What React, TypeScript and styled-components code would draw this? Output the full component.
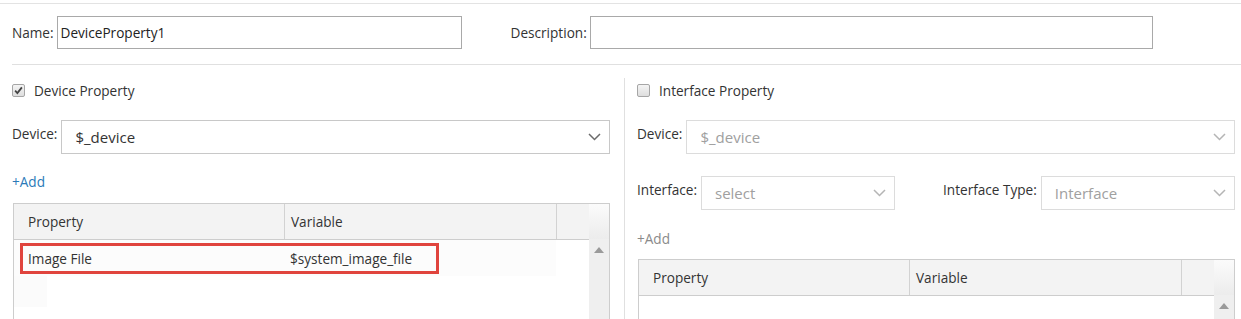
import styled, { createGlobalStyle } from 'styled-components'

const GlobalStyle = createGlobalStyle`
  html, body {
    margin: 0;
    padding: 0;
    background: #fff;
    overflow: hidden;
  }
  body {
    font-family: 'Open Sans', 'Liberation Sans', sans-serif;
    font-size: 13px;
    color: #333;
  }
`

const Page = styled.div`
  width: 1241px;
  height: 319px;
  padding-top: 3px;
  box-sizing: border-box;
  overflow: hidden;
`

const TopRule = styled.div`
  border-top: 1px solid #e3e3e3;
`

const NameRow = styled.div`
  display: flex;
  align-items: center;
  padding: 12px 0 15px 12px;
`

const Field = styled.div<{ $ml?: number }>`
  display: flex;
  align-items: center;
  margin-left: ${({ $ml }) => $ml ?? 0}px;
`

const Label = styled.label`
  font-size: 13.6px;
  color: #333;
  margin-right: 3px;
  white-space: nowrap;
`

const TextInput = styled.div<{ $w: number }>`
  width: ${({ $w }) => $w}px;
  height: 33px;
  box-sizing: border-box;
  border: 1px solid #a9a9a9;
  padding: 0 3px;
  display: flex;
  align-items: center;
  font-size: 13.6px;
  color: #222;
`

const Separator = styled.div`
  margin-left: 12px;
  border-top: 1px solid #e0e0e0;
`

const Columns = styled.div`
  display: grid;
  grid-template-columns: 598px 598px;
  column-gap: 27px;
  padding-left: 12px;
  margin-top: 12px;
`

const Column = styled.div<{ $divider?: boolean }>`
  position: relative;
  display: flex;
  flex-direction: column;
  ${({ $divider }) =>
    $divider &&
    `
    &::before {
      content: '';
      position: absolute;
      left: -13px;
      top: 1px;
      bottom: -40px;
      border-left: 1px solid #e0e0e0;
    }
  `}
`

const CheckRow = styled.div`
  display: flex;
  align-items: center;
  height: 26px;
  font-size: 13.6px;
  color: #333;
`

const Box = styled.span`
  width: 13px;
  height: 13px;
  box-sizing: border-box;
  border: 1px solid #a6a6a6;
  border-radius: 2px;
  background: linear-gradient(#f4f4f4, #dedede);
  margin-right: 9px;
  display: flex;
  align-items: center;
  justify-content: center;
`

const SelectRow = styled.div<{ $mt: number }>`
  display: flex;
  align-items: flex-start;
  margin-top: ${({ $mt }) => $mt}px;
`

const SelectLabel = styled.label`
  font-size: 13.6px;
  color: #333;
  padding-top: 4px;
  margin-right: 4px;
  white-space: nowrap;
`

const Select = styled.div<{ $w?: number; $disabled?: boolean }>`
  ${({ $w }) => ($w ? `width: ${$w}px;` : 'flex: 1;')}
  height: 34px;
  box-sizing: border-box;
  border: 1px solid ${({ $disabled }) => ($disabled ? '#dcdcdc' : '#c8c8c8')};
  display: flex;
  align-items: center;
  justify-content: space-between;
  padding: 0 8px 0 13px;
  font-size: 15px;
  color: ${({ $disabled }) => ($disabled ? '#a0a0a0' : '#333')};
`

const Pair = styled.div<{ $ml?: number; $grow?: boolean }>`
  display: flex;
  align-items: flex-start;
  margin-left: ${({ $ml }) => $ml ?? 0}px;
  ${({ $grow }) => $grow && 'flex: 1;'}
`

const AddLink = styled.a<{ $disabled?: boolean; $mt: number }>`
  display: block;
  margin-top: ${({ $mt }) => $mt}px;
  font-size: 13.6px;
  color: ${({ $disabled }) => ($disabled ? '#8a8a8a' : '#2a7ab8')};
  text-decoration: none;
  line-height: 18px;
`

const Table = styled.div<{ $mt: number }>`
  position: relative;
  margin-top: ${({ $mt }) => $mt}px;
  margin-left: 1px;
  width: 597px;
  border: 1px solid #cdcdcd;
  border-bottom: none;
  box-sizing: border-box;
  display: grid;
  grid-template-columns: 1fr 20px;
  height: 140px;
`

const TableBody = styled.div`
  display: flex;
  flex-direction: column;
`

const HeadRow = styled.div`
  display: grid;
  grid-template-columns: 270px 272px 1fr;
  height: 35px;
  background: #f3f3f3;
  border-bottom: 1px solid #cdcdcd;
`

const HeadCell = styled.div`
  display: flex;
  align-items: center;
  padding-left: 14px;
  font-size: 13.6px;
  color: #333;
  & + & {
    border-left: 1px solid #d2d2d2;
    padding-left: 6px;
  }
`

const DataRow = styled.div`
  display: grid;
  grid-template-columns: 270px 272px;
  width: 542px;
  height: 36px;
  background: #fcfcfc;
`

const DataCell = styled.div`
  display: flex;
  align-items: center;
  padding-left: 14px;
  font-size: 13.6px;
  color: #333;
  & + & {
    padding-left: 6px;
  }
`

const Ghost = styled.div`
  width: 33px;
  height: 31px;
  background: #fbfbfb;
`

const Highlight = styled.div`
  position: absolute;
  left: 6px;
  top: 39px;
  width: 419px;
  height: 31px;
  border: 3px solid #e0443d;
  box-sizing: border-box;
  pointer-events: none;
`

const ScrollBar = styled.div`
  background: #efefef;
  display: flex;
  flex-direction: column;
  align-items: center;
`

const ScrollHead = styled.div`
  width: 100%;
  height: 35px;
  background: linear-gradient(#fbfbfb, #ececec);
`

const UpArrow = styled.div`
  margin-top: 8px;
  width: 0;
  height: 0;
  border-left: 5px solid transparent;
  border-right: 5px solid transparent;
  border-bottom: 6px solid #9a9a9a;
`

function Chevron({ disabled }: { disabled?: boolean }) {
  return (
    <svg width="13" height="8" viewBox="0 0 13 8">
      <path d="M1 1 L6.5 6.5 L12 1" fill="none" stroke={disabled ? '#b5b5b5' : '#6b6b6b'} strokeWidth="1.5" />
    </svg>
  )
}

function CheckBox({ checked }: { checked?: boolean }) {
  return (
    <Box>
      {checked && (
        <svg width="9" height="9" viewBox="0 0 8 8">
          <path d="M1 4.2 L3 6.3 L7 1.2" fill="none" stroke="#444" strokeWidth="1.6" />
        </svg>
      )}
    </Box>
  )
}

function PropertyTable({ mt, rows }: { mt: number; rows: [string, string][] }) {
  return (
    <Table $mt={mt}>
      <TableBody>
        <HeadRow>
          <HeadCell>Property</HeadCell>
          <HeadCell>Variable</HeadCell>
          <HeadCell />
        </HeadRow>
        {rows.map(([p, v]) => (
          <DataRow key={p}>
            <DataCell>{p}</DataCell>
            <DataCell>{v}</DataCell>
          </DataRow>
        ))}
        {rows.length > 0 && <Ghost />}
      </TableBody>
      <ScrollBar>
        <ScrollHead />
        <UpArrow />
      </ScrollBar>
      {rows.length > 0 && <Highlight />}
    </Table>
  )
}

export default function App() {
  return (
    <Page>
      <GlobalStyle />
      <TopRule />
      <NameRow>
        <Field>
          <Label>Name:</Label>
          <TextInput $w={405}>DeviceProperty1</TextInput>
        </Field>
        <Field $ml={49}>
          <Label>Description:</Label>
          <TextInput $w={563} />
        </Field>
      </NameRow>
      <Separator />
      <Columns>
        <Column>
          <CheckRow>
            <CheckBox checked />
            Device Property
          </CheckRow>
          <SelectRow $mt={17}>
            <SelectLabel>Device:</SelectLabel>
            <Select>
              $_device
              <Chevron />
            </Select>
          </SelectRow>
          <AddLink $mt={19}>+Add</AddLink>
          <PropertyTable mt={12} rows={[['Image File', '$system_image_file']]} />
        </Column>
        <Column $divider>
          <CheckRow>
            <CheckBox />
            Interface Property
          </CheckRow>
          <SelectRow $mt={17}>
            <SelectLabel>Device:</SelectLabel>
            <Select $disabled>
              $_device
              <Chevron disabled />
            </Select>
          </SelectRow>
          <SelectRow $mt={22}>
            <Pair>
              <SelectLabel>Interface:</SelectLabel>
              <Select $w={194} $disabled>
                select
                <Chevron disabled />
              </Select>
            </Pair>
            <Pair $ml={48} $grow>
              <SelectLabel>Interface Type:</SelectLabel>
              <Select $disabled>
                Interface
                <Chevron disabled />
              </Select>
            </Pair>
          </SelectRow>
          <AddLink $disabled $mt={20}>+Add</AddLink>
          <PropertyTable mt={11} rows={[]} />
        </Column>
      </Columns>
    </Page>
  )
}
